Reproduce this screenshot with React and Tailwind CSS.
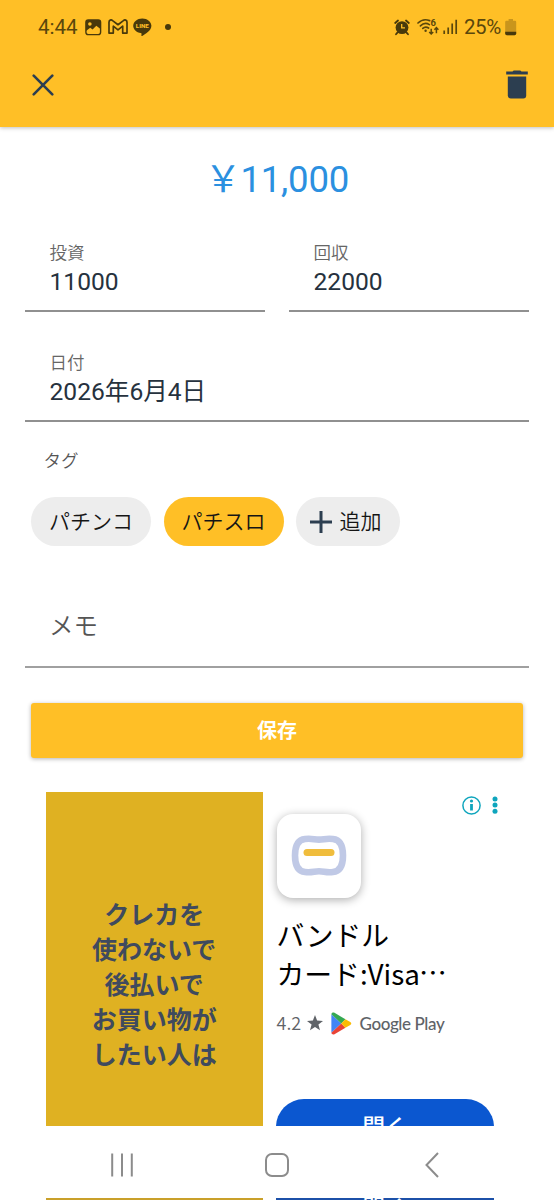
function PictureIcon() {
  return (
    <svg width="17" height="17" viewBox="0 0 17 17" fill="none">
      <rect x="0.9" y="0.9" width="14.7" height="14.7" rx="2.4" stroke="#48390b" strokeWidth="1.4" />
      <path d="M1 2.5Q1 1 2.5 1H14Q15.5 1 15.5 2.5V10L11.3 6.8L7.6 10.6L5.2 8.8L1 12Z" fill="#48390b" />
      <circle cx="4.9" cy="5" r="1.8" fill="#ffbf26" />
    </svg>
  );
}

function MailIcon() {
  return (
    <svg width="20" height="16" viewBox="0 0 20 16" fill="none">
      <path
        d="M1 3.2C1 .9 3.2.4 4.6 1.6L10 5.7L15.4 1.6C16.8.4 19 .9 19 3.2V14.1H14.7V7.2L10 10.8L5.3 7.2V14.1H1Z"
        stroke="#48390b"
        strokeWidth="1.7"
        strokeLinejoin="round"
      />
    </svg>
  );
}

function LineIcon() {
  return (
    <svg width="19" height="19" viewBox="0 0 19 19">
      <path d="M9.3.4C4.2.4.2 3.7.2 7.8c0 3.7 3.2 6.7 7.6 7.3.9.2.8.7.6 2.3-.1.6.2.8.8.5 2.8-1.5 9.2-5.3 9.2-10.1C18.4 3.7 14.3.4 9.3.4Z" fill="#48390b" />
      <text x="9.3" y="10" textAnchor="middle" fontSize="6.2" fontWeight="800" fontFamily="Roboto, sans-serif" fill="#ffbf26">
        LINE
      </text>
    </svg>
  );
}

function AlarmIcon() {
  return (
    <svg width="16" height="17" viewBox="0 0 16 17" fill="none">
      <circle cx="8" cy="8.6" r="6.4" fill="#48390b" />
      <path d="M1.2 4L4 1.5M14.8 4L12 1.5M3.4 13.6L2 15.3M12.6 13.6L14 15.3" stroke="#48390b" strokeWidth="1.8" strokeLinecap="round" />
      <path d="M7.7 4.9V8.9H11" stroke="#ffbf26" strokeWidth="1.3" />
    </svg>
  );
}

function WifiIcon() {
  return (
    <svg width="23" height="18" viewBox="0 0 23 18" fill="none">
      <g stroke="#5a470c" strokeWidth="1.7" strokeLinecap="round">
        <path d="M1 5C4.3 1.8 9 1.2 12.6 2.6" />
        <path d="M3.4 7.8C6 5.4 9.8 5 12.4 6.6" />
        <path d="M5.8 10.4C7.5 8.9 9.8 8.9 11.6 10" />
      </g>
      <circle cx="8.6" cy="12.7" r="1.2" fill="#5a470c" />
      <text x="13.4" y="8.3" fontSize="9.5" fontWeight="700" fontFamily="Roboto, sans-serif" fill="#5a470c">
        6
      </text>
      <path d="M14.2 10.8V15.8M12.2 13.9L14.2 16L16.2 13.9M19.4 15.2V9.8M17.4 11.7L19.4 9.6L21.4 11.7" stroke="#5a470c" strokeWidth="1.5" />
    </svg>
  );
}

function SignalIcon() {
  return (
    <svg width="15" height="16" viewBox="0 0 15 16" stroke="#5a470c" strokeWidth="1.7">
      <path d="M1.2 11.6V15M5.2 8.6V15M9.2 4.6V15M13.2 .8V15" />
    </svg>
  );
}

function BatteryIcon() {
  return (
    <svg width="12" height="17" viewBox="0 0 12 17">
      <path d="M3.6 0H8V1.8H10Q11.2 1.8 11.2 3V14.5Q11.2 16.2 9.5 16.2H1.9Q.2 16.2 .2 14.5V3Q.2 1.8 1.4 1.8H3.6Z" fill="#c9951c" />
      <path d="M.2 12.8H11.2V14.5Q11.2 16.2 9.5 16.2H1.9Q.2 16.2 .2 14.5Z" fill="#48390b" />
    </svg>
  );
}

function CloseIcon() {
  return (
    <svg width="22" height="22" viewBox="0 0 22 22" stroke="#2c3e50" strokeWidth="2.6" strokeLinecap="round">
      <path d="M1.7 1.7L20.3 20.3M20.3 1.7L1.7 20.3" />
    </svg>
  );
}

function TrashIcon() {
  return (
    <svg width="22" height="29" viewBox="0 0 22 29" fill="#2c3e50">
      <path d="M6.5 1.6L7.7 .4H14.3L15.5 1.6H21.8V4.5H.2V1.6Z" />
      <path d="M1.8 6.6H20.2V25.5Q20.2 28.4 17.3 28.4H4.7Q1.8 28.4 1.8 25.5Z" />
    </svg>
  );
}

function PlayLogo() {
  return (
    <svg width="21" height="23" viewBox="0 0 21 23">
      <path d="M.4 2.2V20.8L10.2 11.5Z" fill="#4285f4" />
      <path d="M.4 2.2C.5.6 2.2.1 3.5.8L14.4 7.3L10.2 11.5Z" fill="#34a853" />
      <path d="M.4 20.8C.5 22.4 2.2 22.9 3.5 22.2L14.4 15.7L10.2 11.5Z" fill="#ea4335" />
      <path d="M14.4 7.3L19.3 10.1C20.6 10.9 20.6 12.1 19.3 12.9L14.4 15.7L10.2 11.5Z" fill="#fbbc04" />
    </svg>
  );
}

function BandleLogo() {
  return (
    <svg width="56" height="41" viewBox="0 0 56 41" fill="none">
      <path
        d="M14 4C21 3.2 23 4.6 28 4.6S35 3.2 42 4C49.5 4.8 52 12 52 20.5S49.5 36.2 42 37C35 37.8 33 36.2 28 36.2S21 37.8 14 37C6.5 36.2 4 29 4 20.5S6.5 4.8 14 4Z"
        stroke="#c0c9e6"
        strokeWidth="6.6"
      />
      <rect x="12.5" y="14" width="31" height="7" rx="3.5" fill="#f0bd3c" />
    </svg>
  );
}

function Field({ label, value }) {
  return (
    <div className="h-[76px] flex-1 border-b-2 border-[#909090] pl-[24.5px] pt-[7px]">
      <div className="h-[20px] text-[17.5px] leading-[20px] font-[350] text-[#666]">{label}</div>
      <div className="mt-[3px] h-[32px] text-[24.6px] leading-[32px] text-[#26323e]">{value}</div>
    </div>
  );
}

function Chip({ active, children }) {
  return (
    <div
      className={`flex h-[49px] items-center rounded-full text-[21px] leading-[49px] font-[350] text-[#151515] ${
        active ? "bg-[#ffbf26]" : "bg-[#ededed]"
      }`}
    >
      {children}
    </div>
  );
}

const adLines = ["クレカを", "使わないで", "後払いで", "お買い物が", "したい人は"];

export default function App() {
  return (
    <div className="flex h-[1200px] w-[554px] flex-col overflow-hidden bg-white font-['Roboto','Noto_Sans_CJK_JP',sans-serif]">
      <header className="z-10 h-[127px] shrink-0 bg-[#ffbf26] shadow-[0_1px_4px_rgba(0,0,0,0.25)]">
        <div className="flex h-[54px] items-center justify-between pl-[38px] pr-[37px] text-[20.5px] text-[#5a470c]">
          <div className="flex items-center">
            <span className="w-[47px]">4:44</span>
            <PictureIcon />
            <span className="ml-[6px]"><MailIcon /></span>
            <span className="ml-[5px]"><LineIcon /></span>
            <span className="ml-[13px] size-[6px] rounded-full bg-[#48390b]" />
          </div>
          <div className="flex items-center">
            <AlarmIcon />
            <span className="ml-[7px]"><WifiIcon /></span>
            <span className="ml-[3px]"><SignalIcon /></span>
            <span className="ml-[6px] w-[41px] whitespace-nowrap tracking-[-0.4px]">25%</span>
            <BatteryIcon />
          </div>
        </div>
        <div className="flex h-[61px] items-center justify-between pl-[32px] pr-[26px]">
          <CloseIcon />
          <TrashIcon />
        </div>
      </header>

      <main className="flex h-[999px] shrink-0 flex-col overflow-hidden">
        <div className="mt-[29px] h-[48px] text-center text-[36.6px] leading-[48px] text-[#2b90e0]">
          <span className="-mr-[1px]">￥</span>
          <span className="tracking-[-0.2px]">11,000</span>
        </div>

        <section className="mt-[32px] flex gap-[24px] px-[25px]">
          <Field label="投資" value="11000" />
          <Field label="回収" value="22000" />
        </section>
        <section className="mt-[34px] flex px-[25px]">
          <Field label="日付" value="2026年6月4日" />
        </section>

        <div className="mt-[28px] h-[22px] pl-[43.5px] text-[17.5px] leading-[22px] font-[350] text-[#555]">タグ</div>
        <div className="mt-[25px] flex gap-[12.5px] pl-[31px]">
          <Chip>
            <span className="px-[18px] pt-[2px]">パチンコ</span>
          </Chip>
          <Chip active>
            <span className="px-[18px] pt-[2px]">パチスロ</span>
          </Chip>
          <Chip>
            <svg className="ml-[13.5px]" width="22" height="22" viewBox="0 0 22 22" stroke="#2c3e50" strokeWidth="3">
              <path d="M11 0V22M0 11H22" />
            </svg>
            <span className="pl-[8px] pr-[18px] pt-[2px]">追加</span>
          </Chip>
        </div>

        <div className="mx-[25px] mt-[58px] h-[64px] border-b-2 border-[#a0a0a0] pl-[24px] pt-[2px] text-[24.5px] leading-[42px] font-[350] text-[#555]">
          メモ
        </div>

        <button className="mx-[31px] mt-[35px] h-[55px] shrink-0 rounded-[3px] bg-[#ffbf26] pt-[2px] text-[20px] leading-[53px] font-bold text-white shadow-[0_1px_4px_rgba(0,0,0,0.3)]">
          保存
        </button>

        <section className="mt-[34px] flex h-[334px] shrink-0 pl-[46px]">
          <div className="w-[216.5px] shrink-0 bg-[#dfb122] pt-[105.5px] text-center text-[25px] leading-[35px] font-bold text-[#3f4a5e]">
            {adLines.map((line) => (
              <div key={line} className="h-[35px]">{line}</div>
            ))}
          </div>
          <div className="ml-[13.5px] flex w-[218px] shrink-0 flex-col">
            <div className="flex h-[106px] justify-between">
              <div className="ml-[0.5px] mt-[21.5px] flex size-[84.5px] items-center justify-center rounded-[16px] bg-white shadow-[0_2px_10px_rgba(0,0,0,0.32)]">
                <BandleLogo />
              </div>
              <div className="-mr-[3.5px] mt-[4px] flex h-[18px] items-center gap-[11px]">
                <svg width="19" height="19" viewBox="0 0 19 19" fill="none">
                  <circle cx="9.5" cy="9.5" r="8.6" stroke="#0ea5bd" strokeWidth="1.5" />
                  <circle cx="9.5" cy="5" r="1.6" fill="#0ea5bd" />
                  <path d="M9.5 8V14.5" stroke="#0ea5bd" strokeWidth="2.8" />
                </svg>
                <svg width="6" height="18" viewBox="0 0 6 18" fill="#0ea5bd">
                  <circle cx="3" cy="3" r="2.5" />
                  <circle cx="3" cy="9.1" r="2.5" />
                  <circle cx="3" cy="15.2" r="2.5" />
                </svg>
              </div>
            </div>
            <div className="mt-[17px] pl-[0.5px] font-['Noto_Sans_CJK_JP',sans-serif] text-[27.8px] leading-[39px] whitespace-nowrap text-black">
              <div className="h-[39px]">バンドル</div>
              <div className="h-[39px]">
                カード:Visa<span className="-ml-[1px] inline-block -translate-y-[2px]">…</span>
              </div>
            </div>
            <div className="mt-[18px] flex h-[24px] items-center pl-[0.5px] text-[18px] leading-[24px] text-[#5f6368]">
              <span className="w-[30px] pb-[3px] font-['Noto_Sans_CJK_JP',sans-serif] font-[350]">4.2</span>
              <svg width="16" height="16" viewBox="0 0 16 16" fill="#5f6368">
                <path d="M8 0L10.1 5.6L16 5.9L11.4 9.6L13 15.3L8 12.1L3 15.3L4.6 9.6L0 5.9L5.9 5.6Z" />
              </svg>
              <span className="ml-[8px]"><PlayLogo /></span>
              <span className="ml-[8px] pt-[1px] font-['Lato',sans-serif] text-[17px] font-medium tracking-[-0.4px] whitespace-nowrap">Google Play</span>
            </div>
            <div className="mt-[64px] h-[56px] shrink-0 rounded-full bg-[#0b57d0] text-center text-[22.5px] leading-[56px] font-medium text-white">
              開く
            </div>
          </div>
        </section>
      </main>

      <nav className="z-10 flex h-[72px] shrink-0 items-center bg-white">
        <svg className="ml-[110px] mt-[6px]" width="24" height="24" viewBox="0 0 24 24" stroke="#8c8c8c" strokeWidth="2">
          <path d="M2.2 .5V23.5M12 .5V23.5M21.8 .5V23.5" />
        </svg>
        <div className="ml-[131px] mt-[6px] size-[24px] rounded-[7px] border-2 border-[#8c8c8c]" />
        <svg className="ml-[136px] mt-[6px]" width="14" height="26" viewBox="0 0 14 26" fill="none" stroke="#8c8c8c" strokeWidth="2">
          <path d="M13 1L1.5 13L13 25" />
        </svg>
      </nav>
      {/* the ad keeps showing below the navigation bar */}
      <div className="flex h-[2px] shrink-0 overflow-hidden pl-[46px]">
        <div className="h-[2px] w-[216.5px] bg-[#c9a02a]" />
        <div className="ml-[13.5px] h-[2px] w-[218px] overflow-hidden bg-[#1c50a8] text-center text-[22.5px] font-medium text-white">
          <div className="-mt-[18px] leading-[56px]">開く</div>
        </div>
      </div>
    </div>
  );
}
